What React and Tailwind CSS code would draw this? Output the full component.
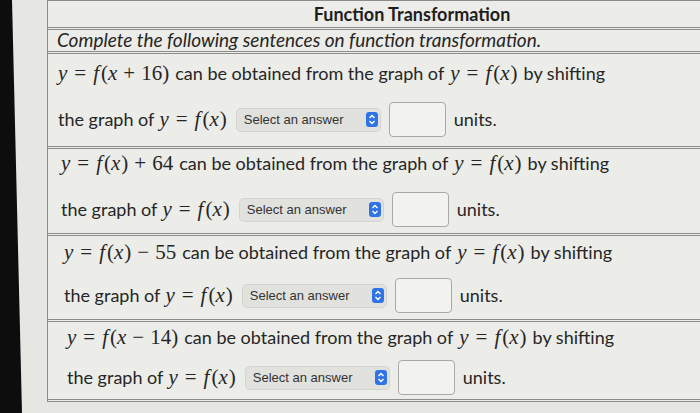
import React from 'react';

const ROWS = [
  { id: 1, box: 'h-[95px] pl-[10px] pt-[8px]', gap: 'mt-[18px]', lead: 'plus16' },
  { id: 2, box: 'h-[87px] pl-[13px] pt-[3px]', gap: 'mt-[18px]', lead: 'plus64' },
  { id: 3, box: 'h-[86px] pl-[16px] pt-[5px]', gap: 'mt-[15px]', lead: 'minus55' },
  { id: 4, box: 'h-[80px] pl-[19px] pt-[4px]', gap: 'mt-[12px]', lead: 'minus14' },
];

const Math = ({ children }) => (
  <span className="inline-flex items-baseline font-['Liberation_Serif',serif] text-[21px] leading-none text-[#262626]">
    {children}
  </span>
);

const Eq = () => <span className="mx-[7px]">=</span>;
const Op = ({ c }) => <span className="mx-[6px]">{c}</span>;

const Fx = () => (
  <Math>
    <i>y</i>
    <Eq />
    <i className="pr-[2px]">f</i>(<i className="pr-[1px]">x</i>)
  </Math>
);

const Lead = ({ kind }) => {
  if (kind === 'plus16')
    return (
      <Math>
        <i>y</i>
        <Eq />
        <i className="pr-[2px]">f</i>(<i>x</i>
        <Op c="+" />
        16)
      </Math>
    );
  if (kind === 'plus64')
    return (
      <Math>
        <i>y</i>
        <Eq />
        <i className="pr-[2px]">f</i>(<i className="pr-[1px]">x</i>)
        <Op c="+" />
        64
      </Math>
    );
  if (kind === 'minus55')
    return (
      <Math>
        <i>y</i>
        <Eq />
        <i className="pr-[2px]">f</i>(<i className="pr-[1px]">x</i>)
        <Op c="−" />
        55
      </Math>
    );
  return (
    <Math>
      <i>y</i>
      <Eq />
      <i className="pr-[2px]">f</i>(<i>x</i>
      <Op c="−" />
      14)
    </Math>
  );
};

const SelectBox = () => (
  <div className="ml-[10px] flex h-[22px] w-[143px] items-center justify-between rounded-[4px] bg-[#e1e1de] pl-[7px] pr-[2px] shadow-[0_0_0_1px_#d4d4d0]">
    <span className="font-['Liberation_Sans',sans-serif] text-[13px] text-[#333]">Select an answer</span>
    <span className="flex h-[15px] w-[12px] items-center justify-center rounded-[3px] bg-[#2f73e6]">
      <svg width="8" height="11" viewBox="0 0 8 11">
        <path d="M1.5 4 L4 1.5 L6.5 4" fill="none" stroke="#fff" strokeWidth="1.4" />
        <path d="M1.5 7 L4 9.5 L6.5 7" fill="none" stroke="#fff" strokeWidth="1.4" />
      </svg>
    </span>
  </div>
);

const Block = ({ row }) => (
  <div className={`border-t-[3px] border-double border-[#8c8c8a] ${row.box}`}>
    <div className="flex h-[22px] items-center gap-[6px] whitespace-nowrap text-[18px] text-[#262626]">
      <Lead kind={row.lead} />
      <span>can be obtained from the graph of</span>
      <Fx />
      <span>by shifting</span>
    </div>
    <div className={`flex items-center whitespace-nowrap text-[18px] text-[#262626] ${row.gap}`}>
      <span className="mr-[5px]">the graph of</span>
      <Fx />
      <SelectBox />
      <div className="ml-[9px] h-[35px] w-[57px] rounded-[4px] border border-[#a9a9a6] bg-[#f2f2ef]" />
      <span className="ml-[8px]">units.</span>
    </div>
  </div>
);

export default function App() {
  return (
    <div className="flex h-[413px] w-[700px] overflow-hidden bg-[#e6e6e2] font-['Lato','Liberation_Sans',sans-serif]">
      <div className="w-[24px] shrink-0 bg-[#0d0d0d] [clip-path:polygon(0_0,12px_0,22px_100%,0_100%)]" />
      <div className="flex-1 pl-[23px]">
        <div className="w-[700px] border-x border-b-[3px] border-t border-double border-[#8c8c8a] bg-[#ecece8]">
          <div className="flex h-[26px] items-center justify-center pl-[30px] text-[18px] font-bold text-[#1e1e1e]">
            Function Transformation
          </div>
          <div className="flex h-[24px] items-center border-t-[3px] border-double border-[#8c8c8a] pl-[9px] text-[19px] italic text-[#262626]">
            Complete the following sentences on function transformation.
          </div>
          {ROWS.map((r) => (
            <Block key={r.id} row={r} />
          ))}
        </div>
      </div>
    </div>
  );
}
